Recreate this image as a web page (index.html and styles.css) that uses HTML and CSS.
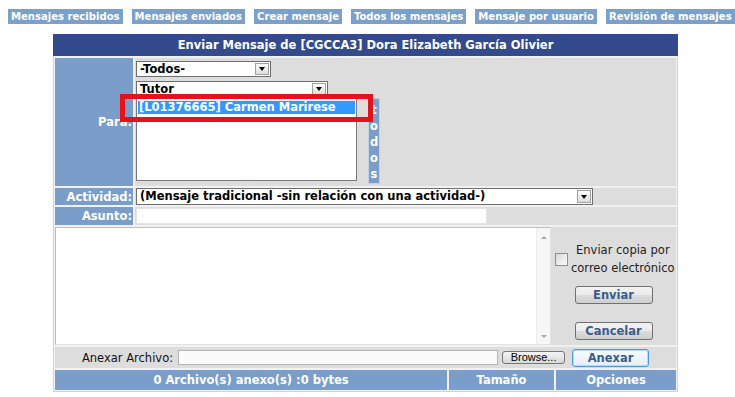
FILE: index.html
```html
<!DOCTYPE html>
<html lang="es">
<head>
    <meta charset="UTF-8">
    <title>Enviar Mensaje</title>
    <link rel="stylesheet" href="styles.css">
</head>
<body>
<div class="topnav">
    <a href="#" class="navbtn">Mensajes recibidos</a>
    <a href="#" class="navbtn">Mensajes enviados</a>
    <a href="#" class="navbtn">Crear mensaje</a>
    <a href="#" class="navbtn">Todos los mensajes</a>
    <a href="#" class="navbtn">Mensaje por usuario</a>
    <a href="#" class="navbtn">Revisión de mensajes</a>
</div>

<div class="panel">
    <div class="panel-head">Enviar Mensaje de [CGCCA3] Dora Elizabeth García Olivier</div>
    <div class="form-grid">
        <div class="lbl">Para:</div>
        <div class="cell para-cell">
            <div class="combo combo-todos"><span class="combo-text">-Todos-</span><span class="combo-btn"><i class="caret"></i></span></div>
            <div class="combo combo-tutor"><span class="combo-text">Tutor</span><span class="combo-btn"><i class="caret"></i></span></div>
            <div class="list-row">
                <div class="listbox">
                    <div class="opt sel">[L01376665] Carmen Marirese</div>
                </div>
                <div class="todos-btn"><span>t</span><span>o</span><span>d</span><span>o</span><span>s</span></div>
            </div>
        </div>

        <div class="lbl">Actividad:</div>
        <div class="cell act-cell">
            <div class="combo combo-act"><span class="combo-text">(Mensaje tradicional -sin relación con una actividad-)</span><span class="combo-btn"><i class="caret"></i></span></div>
        </div>

        <div class="lbl">Asunto:</div>
        <div class="cell"><div class="textbox asunto"></div></div>

        <div class="msg-row">
            <div class="msgbox">
                <div class="msg-area"></div>
                <div class="vscroll"><i class="arr-up"></i><i class="arr-down"></i></div>
            </div>
            <div class="side">
                <label class="copy"><span class="chk"></span><span class="copy-text">Enviar copia por<br>correo electrónico</span></label>
                <button class="btn">Enviar</button>
                <button class="btn btn-cancel">Cancelar</button>
            </div>
        </div>

        <div class="file-row">
            <span class="file-lbl">Anexar Archivo:</span>
            <span class="file-box"></span>
            <button class="browse">Browse...</button>
            <button class="btn anexar">Anexar</button>
        </div>

        <div class="foot-row">
            <div class="foot-cell">0 Archivo(s) anexo(s) :0 bytes</div>
            <div class="foot-cell">Tamaño</div>
            <div class="foot-cell">Opciones</div>
        </div>
    </div>
</div>

<div class="mark"></div>
</body>
</html>
```

FILE: styles.css
```css
body {
    margin: 0;
    background: #fff;
    font-family: "DejaVu Sans", Verdana, sans-serif;
    font-size: 11.5px;
    color: #000;
    position: relative;
}

/* barra superior */
.topnav {
    display: flex;
    gap: 9px;
    padding: 9px 0 0 8px;
}
.navbtn {
    background: #7ba0cc;
    color: #fff;
    font: bold 11.2px "DejaVu Sans Condensed", Tahoma, sans-serif;
    line-height: 15px;
    padding: 0 3px;
    text-decoration: none;
}

/* panel principal */
.panel {
    width: 625px;
    margin: 10px 0 0 53px;
}
.panel-head {
    height: 22px;
    line-height: 22px;
    background: #334b8c;
    color: #fff;
    font-weight: bold;
    font-size: 11.5px;
    text-align: center;
}
.form-grid {
    display: grid;
    grid-template-columns: 78px 541px;
    grid-template-rows: 128px 17px 18px 118px 21px 20px;
    gap: 2px;
    padding: 2px 1px 1px 1px;
    background: #f1f1f1;
    border: 1px solid #d2d2d2;
    border-top: 0;
}
.lbl {
    background: #7a9dc9;
    color: #fff;
    font-weight: bold;
    display: flex;
    align-items: center;
    justify-content: flex-end;
    padding-right: 1px;
}
.cell {
    background: #dddddd;
}
.para-cell {
    padding: 3px 0 0 1px;
}
.act-cell {
    padding-left: 1px;
}

/* combos */
.combo {
    display: flex;
    height: 16px;
    box-sizing: border-box;
    border: 1px solid #6e6e6e;
    background: #fff;
}
.combo-todos { width: 135px; }
.combo-tutor { width: 192px; margin-top: 4px; }
.combo-act { width: 457px; height: 17px; }
.combo-text {
    flex: 1;
    padding-left: 3px;
    font-weight: bold;
    line-height: 14px;
    white-space: nowrap;
    overflow: hidden;
}
.combo-btn {
    width: 14px;
    margin: 1px;
    box-sizing: border-box;
    border: 1px solid #a0a0a0;
    background: linear-gradient(#fdfdfd, #dedede);
    display: flex;
    align-items: center;
    justify-content: center;
}
.caret {
    width: 0;
    height: 0;
    border-left: 3.5px solid transparent;
    border-right: 3.5px solid transparent;
    border-top: 4px solid #000;
}

/* lista de destinatarios */
.list-row {
    display: flex;
    align-items: flex-start;
    margin-top: 1px;
}
.listbox {
    width: 221px;
    height: 83px;
    box-sizing: border-box;
    border: 1px solid #7a7a7a;
    background: #fff;
    padding: 2px 1px 0 1px;
}
.opt {
    height: 13px;
    line-height: 13px;
    padding-left: 1px;
    font-weight: bold;
    white-space: nowrap;
}
.opt.sel {
    background: #3399ff;
    color: #fff;
}
.todos-btn {
    margin-left: 11px;
    width: 12px;
    height: 86px;
    box-sizing: border-box;
    padding-top: 3px;
    background: #7a9dc9;
    border: 1px solid #c3d3e6;
    color: #fff;
    font-weight: bold;
    line-height: 16px;
    display: flex;
    flex-direction: column;
    align-items: center;
}

.textbox {
    height: 16px;
    box-sizing: border-box;
    border: 1px solid #e4e4e4;
    background: #fff;
}
.asunto {
    width: 351px;
    margin: 1px 0 0 1px;
}

/* mensaje */
.msg-row {
    grid-column: 1 / -1;
    display: flex;
    background: #dddddd;
}
.msgbox {
    width: 496px;
    height: 118px;
    box-sizing: border-box;
    display: flex;
    background: #fff;
    border: 1px solid #bdbdbd;
    border-right-color: #e2e2e2;
    border-bottom-color: #e2e2e2;
}
.msg-area {
    flex: 1;
}
.vscroll {
    width: 13px;
    background: #f6f6f6;
    border-left: 1px solid #ececec;
    display: flex;
    flex-direction: column;
    justify-content: space-between;
    align-items: center;
    padding: 8px 0 6px;
}
.arr-up {
    width: 0;
    height: 0;
    border-left: 3px solid transparent;
    border-right: 3px solid transparent;
    border-bottom: 3px solid #a8a8a8;
}
.arr-down {
    width: 0;
    height: 0;
    border-left: 3px solid transparent;
    border-right: 3px solid transparent;
    border-top: 3px solid #a8a8a8;
}
.side {
    flex: 1;
    display: flex;
    flex-direction: column;
    align-items: center;
    padding-top: 14px;
}
.copy {
    align-self: flex-start;
    margin-left: 4px;
    display: flex;
    align-items: center;
    gap: 3px;
}
.chk {
    width: 13px;
    height: 13px;
    box-sizing: border-box;
    border: 1px solid #8f8f8f;
    background: linear-gradient(135deg, #d6d6d6, #fdfdfd);
}
.copy-text {
    text-align: center;
    line-height: 18px;
    color: #222;
}
.btn {
    width: 78px;
    height: 18px;
    margin-top: 9px;
    padding: 0;
    border: 1px solid #707070;
    border-radius: 3px;
    background: linear-gradient(#f2f2f2 0, #ebebeb 50%, #dddddd 50%, #cfcfcf 100%);
    color: #3b5c8c;
    font: bold 11.5px "DejaVu Sans", Verdana, sans-serif;
}
.btn-cancel {
    margin-top: 18px;
}

/* archivo */
.file-row {
    grid-column: 1 / -1;
    background: #dddddd;
    display: flex;
    align-items: center;
    justify-content: center;
}
.file-lbl {
    margin-right: 5px;
    color: #111;
}
.file-box {
    width: 320px;
    height: 15px;
    box-sizing: border-box;
    border: 1px solid #b4b4b4;
    background: #fbfbfb;
}
.browse {
    margin-left: 4px;
    width: 63px;
    height: 13px;
    padding: 0;
    border: 1px solid #777;
    border-radius: 3px;
    background: linear-gradient(#f4f4f4, #d8d8d8);
    font: 11px "Liberation Sans", Arial, sans-serif;
    line-height: 11px;
    color: #000;
}
.btn.anexar {
    margin: 0 0 0 7px;
    width: 77px;
    border-color: #4b9be0;
    box-shadow: inset 0 0 0 1px #b5dcf7;
    background: linear-gradient(#f6fbfe, #e4eff8);
}

/* pie */
.foot-row {
    grid-column: 1 / -1;
    display: grid;
    grid-template-columns: 392px 105px 1fr;
    gap: 2px;
}
.foot-cell {
    background: #7a9dc9;
    color: #fff;
    font-weight: bold;
    text-align: center;
    line-height: 20px;
}

/* marca roja sobre la lista */
.mark {
    position: absolute;
    left: 120px;
    top: 94px;
    width: 253px;
    height: 28px;
    box-sizing: border-box;
    border: 5px solid #e3131e;
}
```
